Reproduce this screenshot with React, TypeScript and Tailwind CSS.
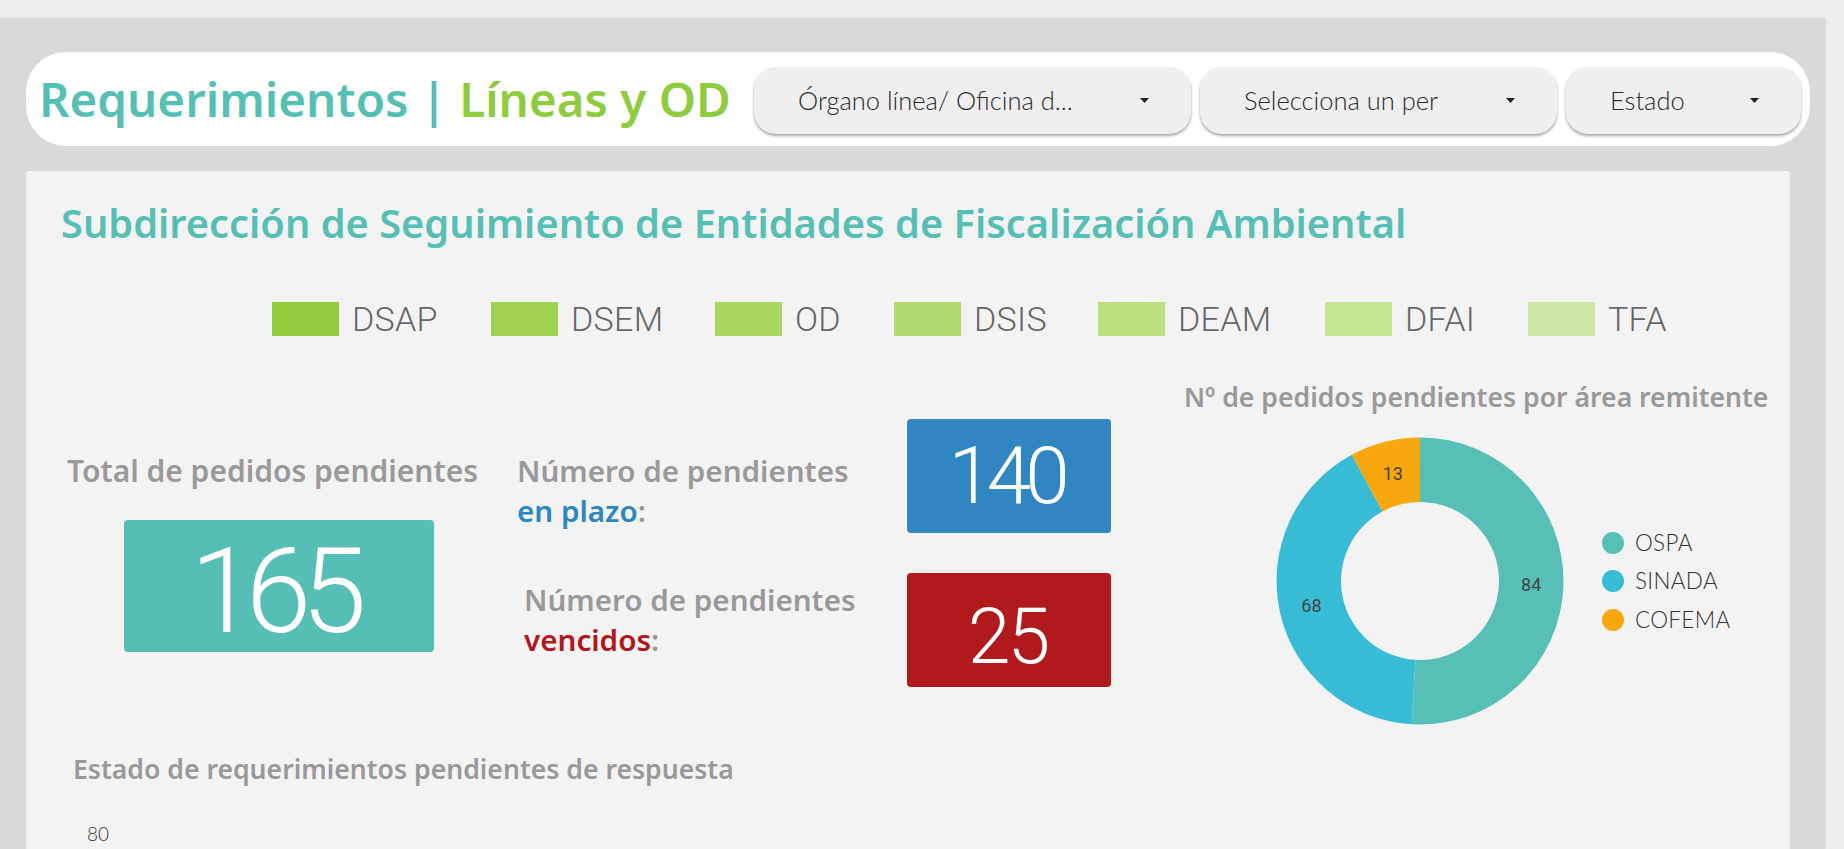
import React from "react";

const legend = [
  { name: "DSAP", color: "bg-[#93cb3c]", w: "w-[219px]" },
  { name: "DSEM", color: "bg-[#9ed14f]", w: "w-[224px]" },
  { name: "OD", color: "bg-[#a8d661]", w: "w-[179px]" },
  { name: "DSIS", color: "bg-[#b2da70]", w: "w-[204px]" },
  { name: "DEAM", color: "bg-[#bce07f]", w: "w-[227px]" },
  { name: "DFAI", color: "bg-[#c5e595]", w: "w-[203px]" },
  { name: "TFA", color: "bg-[#cde8a4]", w: "w-[160px]" },
];

const slices = [
  { name: "OSPA", value: 84, color: "#57bfb5", dot: "bg-[#57bfb5]" },
  { name: "SINADA", value: 68, color: "#38bcd5", dot: "bg-[#38bcd5]" },
  { name: "COFEMA", value: 13, color: "#f8a70c", dot: "bg-[#f8a70c]" },
];

function Arrow() {
  return (
    <svg width="9" height="5" viewBox="0 0 9 5" className="shrink-0">
      <path d="M0 0h9L4.5 5z" fill="#222" />
    </svg>
  );
}

function Dropdown({ label, w }: { label: string; w: string }) {
  return (
    <div
      className={`${w} h-[67px] shrink-0 bg-[#efefef] rounded-[22px] shadow-[0_2px_3px_rgba(0,0,0,0.35)] flex items-center justify-between pl-[44px] pr-[42px]`}
    >
      <span className="font-['Lato',sans-serif] text-[25.5px] text-[#2a2a2a] font-light whitespace-nowrap">
        {label}
      </span>
      <Arrow />
    </div>
  );
}

function Donut() {
  const cx = 144;
  const cy = 144;
  const R = 143.5;
  const r = 79;
  const total = slices.reduce((s, x) => s + x.value, 0);
  let start = 0;
  const pt = (rad: number, deg: number) => {
    const a = (deg * Math.PI) / 180;
    return [cx + rad * Math.sin(a), cy - rad * Math.cos(a)];
  };
  return (
    <svg width="288" height="288" viewBox="0 0 288 288" className="shrink-0">
      {slices.map((s) => {
        const sweep = (s.value / total) * 360;
        const end = start + sweep;
        const [x1, y1] = pt(R, start);
        const [x2, y2] = pt(R, end);
        const [x3, y3] = pt(r, end);
        const [x4, y4] = pt(r, start);
        const large = sweep > 180 ? 1 : 0;
        const d = `M${x1} ${y1}A${R} ${R} 0 ${large} 1 ${x2} ${y2}L${x3} ${y3}A${r} ${r} 0 ${large} 0 ${x4} ${y4}Z`;
        const mid = start + sweep / 2;
        const [lx, ly] = pt((R + r) / 2, mid);
        start = end;
        return (
          <g key={s.name}>
            <path d={d} fill={s.color} />
            <text
              x={lx}
              y={ly}
              textAnchor="middle"
              dominantBaseline="central"
              fontFamily="Roboto, sans-serif"
              fontSize="18"
              fill="#444"
            >
              {s.value}
            </text>
          </g>
        );
      })}
    </svg>
  );
}

export default function App() {
  return (
    <div className="w-[1844px] h-[849px] overflow-hidden bg-[#eeeeee] font-['Noto_Sans',sans-serif]">
      <div className="h-[18px]" />
      <div className="w-[1825px] h-[831px] bg-[#d9d9d9] shadow-[0_0_3px_rgba(0,0,0,0.12)] pl-[26px] pt-[34px]">
        {/* cabecera */}
        <header className="w-[1784px] h-[94px] bg-white rounded-[40px] flex items-center pl-[13px]">
          <h1 className="w-[715px] shrink-0 text-[47.5px] leading-none font-semibold whitespace-nowrap text-[#56bfb5]">
            Requerimientos | <span className="text-[#8fcb3e]">Líneas y OD</span>
          </h1>
          <div className="flex gap-[9px] mt-[3px]">
            <Dropdown label="Órgano línea/ Oficina d..." w="w-[437px]" />
            <Dropdown label="Selecciona un per" w="w-[357px]" />
            <Dropdown label="Estado" w="w-[235px]" />
          </div>
        </header>

        {/* contenido */}
        <main className="mt-[25px] w-[1764px] h-[700px] bg-[#f3f3f3] rounded-[4px] pt-[32px]">
          <h2 className="pl-[35px] text-[39.8px] leading-none font-semibold text-[#56bfb5] whitespace-nowrap">
            Subdirección de Seguimiento de Entidades de Fiscalización Ambiental
          </h2>

          <div className="mt-[59px] pl-[246px] flex">
            {legend.map((l) => (
              <div key={l.name} className={`${l.w} shrink-0 flex items-center gap-[13px]`}>
                <div className={`w-[67px] h-[34px] shrink-0 ${l.color}`} />
                <span className="font-['Roboto',sans-serif] text-[34px] tracking-[0.3px] leading-none text-[#666] font-light whitespace-nowrap">
                  {l.name}
                </span>
              </div>
            ))}
          </div>

          <div className="mt-[44px] flex items-start">
            {/* total */}
            <div className="w-[493px] shrink-0 flex flex-col items-center">
              <p className="mt-[76px] text-[30px] leading-none font-semibold text-[#999] whitespace-nowrap">
                Total de pedidos pendientes
              </p>
              <div className="mt-[34px] ml-[12px] w-[310px] h-[132px] bg-[#56bfb5] rounded-[4px] flex items-center justify-center pt-[12px]">
                <span className="font-['Roboto',sans-serif] font-light text-[118px] leading-none tracking-[-10px] text-white pr-[10px]">
                  165
                </span>
              </div>
            </div>

            {/* plazo / vencidos */}
            <div className="w-[592px] shrink-0 mt-[39px] flex flex-col gap-[40px]">
              <div className="flex">
                <p className="w-[388px] mt-[32px] ml-[-2px] text-[29.6px] leading-[40px] font-semibold text-[#999] whitespace-nowrap">
                  Número de pendientes
                  <br />
                  <span className="text-[#2e86c1]">en plazo</span>:
                </p>
                <div className="w-[204px] h-[114px] ml-[2px] bg-[#2f86c0] rounded-[4px] flex items-center justify-center">
                  <span className="font-['Roboto',sans-serif] font-light text-[80px] leading-none tracking-[-6px] text-white pr-[6px]">
                    140
                  </span>
                </div>
              </div>
              <div className="flex">
                <p className="w-[388px] mt-[7px] pl-[5px] text-[29.6px] leading-[40px] font-semibold text-[#999] whitespace-nowrap">
                  Número de pendientes
                  <br />
                  <span className="text-[#b0171c]">vencidos</span>:
                </p>
                <div className="w-[204px] h-[114px] bg-[#b01a1d] rounded-[4px] flex items-center justify-center pt-[16px]">
                  <span className="font-['Roboto',sans-serif] font-light text-[77px] leading-none tracking-[-3px] text-white pr-[3px]">
                    25
                  </span>
                </div>
              </div>
            </div>

            {/* dona */}
            <div className="ml-[73px] w-[600px] shrink-0">
              <p className="mt-[4px] text-[26.6px] leading-none font-semibold text-[#999] whitespace-nowrap">
                Nº de pedidos pendientes por área remitente
              </p>
              <div className="mt-[27px] pl-[92px] flex items-center">
                <Donut />
                <div className="ml-[38px] flex flex-col gap-[16px]">
                  {slices.map((s) => (
                    <div key={s.name} className="flex items-center gap-[11px]">
                      <div className={`w-[22px] h-[22px] shrink-0 rounded-full ${s.dot}`} />
                      <span className="font-['Lato',sans-serif] text-[22.5px] tracking-[0.3px] leading-none text-[#333] font-light">
                        {s.name}
                      </span>
                    </div>
                  ))}
                </div>
              </div>
            </div>
          </div>

          <p className="mt-[31px] pl-[47px] text-[26.6px] leading-none font-semibold text-[#999] whitespace-nowrap">
            Estado de requerimientos pendientes de respuesta
          </p>
          <p className="mt-[41px] pl-[61px] font-['Lato',sans-serif] text-[19px] leading-none text-[#333] font-light">
            80
          </p>
        </main>
      </div>
    </div>
  );
}
